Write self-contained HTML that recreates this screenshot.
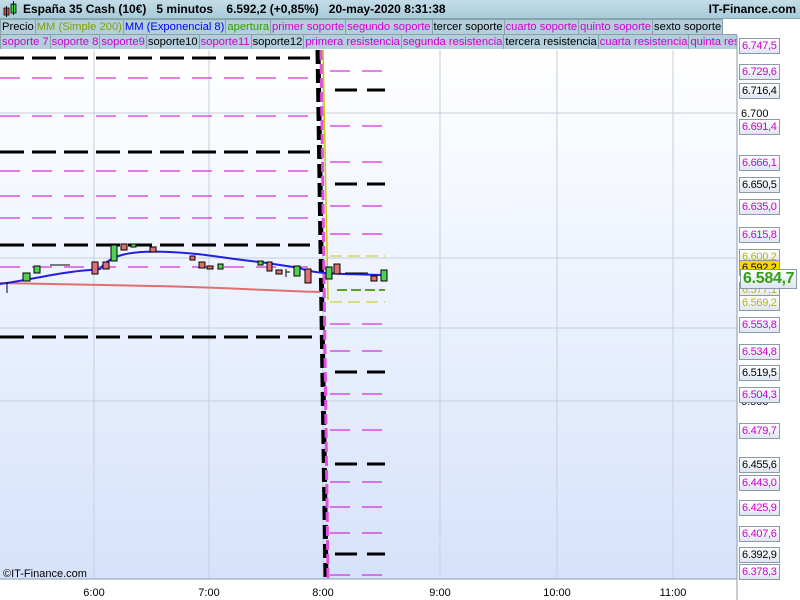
<!DOCTYPE html>
<html><head><meta charset="utf-8"><style>
body{margin:0;width:800px;height:600px;overflow:hidden;font-family:"Liberation Sans",sans-serif;background:#fff;position:relative}
.hdr{position:absolute;left:0;top:0;width:800px;height:18px;background:linear-gradient(#c4dde8,#a9cbda);border-bottom:1px solid #8aa;font-size:12px;font-weight:bold;line-height:18px}
.row{position:absolute;left:0;height:15px;font-size:11.2px;line-height:15px;white-space:nowrap;overflow:hidden;width:737px;background:#fff}
.row span{display:inline-block;background:#b3cfdc;border:1px solid #8aa1ab;padding:0 1px;margin-right:-1px;height:14px;line-height:14px}
.ax{position:absolute;left:739px;font-size:11px;height:14px;line-height:14px;border:1px solid #8a9aa8;background:linear-gradient(#fff,#dfe6f2);padding:0 2px;color:#d000d0;letter-spacing:-0.3px}
.k{color:#000}.y{color:#b8b800}
</style></head><body>
<div class="hdr"><svg width="18" height="18" style="position:absolute;left:2px;top:0"><rect x="2" y="8" width="5" height="7" fill="#e05050" stroke="#000" stroke-width=".8"/><line x1="4.5" y1="6" x2="4.5" y2="17" stroke="#000"/><rect x="9" y="4" width="5" height="9" fill="#40d040" stroke="#000" stroke-width=".8"/><line x1="11.5" y1="1" x2="11.5" y2="15" stroke="#000"/></svg><span style="position:absolute;left:23px">España 35 Cash (10€)&nbsp;&nbsp;&nbsp;5 minutos&nbsp;&nbsp;&nbsp;&nbsp;6.592,2 (+0,85%)&nbsp;&nbsp;&nbsp;20-may-2020 8:31:38</span><span style="position:absolute;right:4px">IT-Finance.com</span></div>
<div class="row" style="top:19px"><span>Precio</span><span style="color:#80a000">MM (Simple 200)</span><span style="color:#0000ff">MM (Exponencial 8)</span><span style="color:#30a000">apertura</span><span style="color:#d000d0">primer soporte</span><span style="color:#d000d0">segundo soporte</span><span>tercer soporte</span><span style="color:#d000d0">cuarto soporte</span><span style="color:#d000d0">quinto soporte</span><span>sexto soporte</span></div>
<div class="row" style="top:34px"><span style="color:#d000d0">soporte 7</span><span style="color:#d000d0">soporte 8</span><span style="color:#d000d0">soporte9</span><span>soporte10</span><span style="color:#d000d0">soporte11</span><span>soporte12</span><span style="color:#d000d0">primera resistencia</span><span style="color:#d000d0">segunda resistencia</span><span>tercera resistencia</span><span style="color:#d000d0">cuarta resistencia</span><span style="color:#d000d0">quinta resistencia</span></div>
<svg width="800" height="600" style="position:absolute;left:0;top:0;z-index:-0" viewBox="0 0 800 600">
<defs><linearGradient id="g" x1="0" y1="0" x2="0" y2="1"><stop offset="0" stop-color="#fff"/><stop offset="1" stop-color="#d6e2fb"/></linearGradient></defs>
<rect x="0" y="50" width="737" height="529" fill="url(#g)"/>
<g stroke="#c5cfdc" stroke-width="1">
<line x1="94" y1="50" x2="94" y2="578"/><line x1="209" y1="50" x2="209" y2="578"/><line x1="323" y1="50" x2="323" y2="578"/><line x1="440" y1="50" x2="440" y2="578"/><line x1="557" y1="50" x2="557" y2="578"/><line x1="673" y1="50" x2="673" y2="578"/>
<line x1="0" y1="113" x2="737" y2="113"/><line x1="0" y1="258" x2="737" y2="258"/><line x1="0" y1="328" x2="737" y2="328"/><line x1="0" y1="401" x2="737" y2="401"/>
</g>
<g stroke="#000" stroke-width="3" stroke-dasharray="24,8">
<line x1="0" y1="58" x2="310" y2="58"/><line x1="0" y1="152" x2="310" y2="152"/><line x1="0" y1="245" x2="310" y2="245"/><line x1="0" y1="337" x2="318" y2="337"/>
</g>
<g stroke="#000" stroke-width="3" stroke-dasharray="22,10">
<line x1="335" y1="90" x2="385" y2="90"/><line x1="335" y1="184" x2="385" y2="184"/><line x1="335" y1="372" x2="385" y2="372"/><line x1="335" y1="464" x2="385" y2="464"/><line x1="335" y1="554" x2="385" y2="554"/>
</g>
<g stroke="#d000d0" stroke-width="1" stroke-dasharray="20,12">
<line x1="0" y1="78" x2="310" y2="78"/><line x1="0" y1="116" x2="310" y2="116"/><line x1="0" y1="171" x2="310" y2="171"/><line x1="0" y1="196" x2="310" y2="196"/><line x1="0" y1="218" x2="310" y2="218"/><line x1="0" y1="267" x2="310" y2="267"/>
<line x1="330" y1="71" x2="385" y2="71"/><line x1="330" y1="126" x2="385" y2="126"/><line x1="330" y1="162" x2="385" y2="162"/><line x1="330" y1="206" x2="385" y2="206"/><line x1="330" y1="234" x2="385" y2="234"/><line x1="330" y1="324" x2="385" y2="324"/><line x1="330" y1="351" x2="385" y2="351"/><line x1="330" y1="394" x2="385" y2="394"/><line x1="330" y1="430" x2="385" y2="430"/><line x1="330" y1="482" x2="385" y2="482"/><line x1="330" y1="507" x2="385" y2="507"/><line x1="330" y1="533" x2="385" y2="533"/><line x1="330" y1="575" x2="385" y2="575"/>
</g>
<g stroke="#c8c800" stroke-width="1" stroke-dasharray="12,6"><line x1="330" y1="256" x2="385" y2="256"/><line x1="330" y1="302" x2="385" y2="302"/></g>
<line x1="337" y1="290" x2="385" y2="290" stroke="#60a020" stroke-width="2" stroke-dasharray="10,4"/>
<g stroke="#000" stroke-width="5" stroke-dasharray="14,5"><line x1="318" y1="50" x2="326" y2="578"/></g>
<line x1="321" y1="50" x2="328" y2="578" stroke="#e050e0" stroke-width="3" stroke-dasharray="10,4"/>
<line x1="323" y1="50" x2="328" y2="300" stroke="#c8c800" stroke-width="1.5"/>
<path d="M0 283 C40 284,80 285,150 286 S250 290,320 292" stroke="#e07070" stroke-width="2" fill="none"/>
<path d="M0 284 C30 280,60 272,90 270 L100 269 C110 255,130 250,170 252 S220 258,260 262 L300 268 C310 273,330 274,385 275" stroke="#2020e0" stroke-width="2" fill="none"/>
<g stroke="#000" stroke-width="1">
<g fill="#50d050"><rect x="23" y="273" width="7" height="8"/><rect x="34" y="266" width="6" height="7"/><rect x="111" y="245" width="6" height="16"/><rect x="131" y="244" width="5" height="3"/><rect x="218" y="264" width="5" height="5"/><rect x="258" y="261" width="5" height="4"/><rect x="294" y="266" width="6" height="10"/><rect x="326" y="267" width="6" height="12"/><rect x="381" y="270" width="6" height="11"/></g>
<g fill="#e07070"><rect x="92" y="262" width="6" height="12"/><rect x="103" y="262" width="6" height="7"/><rect x="121" y="244" width="6" height="6"/><rect x="150" y="247" width="6" height="5"/><rect x="190" y="256" width="5" height="4"/><rect x="199" y="262" width="6" height="6"/><rect x="207" y="266" width="6" height="3"/><rect x="267" y="262" width="5" height="9"/><rect x="276" y="270" width="6" height="4"/><rect x="305" y="269" width="6" height="14"/><rect x="334" y="264" width="6" height="10"/><rect x="371" y="276" width="6" height="5"/></g>
<line x1="7" y1="282" x2="7" y2="293"/><line x1="50" y1="265" x2="70" y2="265"/><line x1="286" y1="272" x2="290" y2="272"/><line x1="286" y1="269" x2="286" y2="277"/><line x1="160" y1="246" x2="178" y2="246"/><line x1="345" y1="273" x2="368" y2="273"/>
</g>
<rect x="0" y="579" width="737" height="21" fill="#fff"/><line x1="0" y1="579" x2="737" y2="579" stroke="#8a9aa8"/>
<line x1="737" y1="35" x2="737" y2="600" stroke="#8a9aa8"/>
<g font-size="11" text-anchor="middle" fill="#000" font-family="Liberation Sans"><text x="94" y="596">6:00</text><text x="209" y="596">7:00</text><text x="323" y="596">8:00</text><text x="440" y="596">9:00</text><text x="557" y="596">10:00</text><text x="673" y="596">11:00</text></g>
<text x="3" y="577" font-size="11" fill="#000" font-family="Liberation Sans">©IT-Finance.com</text>
<text x="741" y="117" font-size="11">6.700</text><text x="741" y="405" font-size="11">6.500</text>
</svg>
<div class="ax" style="top:38px">6.747,5</div><div class="ax" style="top:64px">6.729,6</div><div class="ax k" style="top:83px">6.716,4</div><div class="ax" style="top:119px">6.691,4</div><div class="ax" style="top:155px">6.666,1</div><div class="ax k" style="top:177px">6.650,5</div><div class="ax" style="top:199px">6.635,0</div><div class="ax" style="top:227px">6.615,8</div><div class="ax y" style="top:249px">6.600,2</div><div class="ax k" style="top:260px;background:#f8d800">6.592,2</div><div class="ax y" style="top:282px">6.577,1</div><div class="ax y" style="top:295px">6.569,2</div>
<div class="ax" style="top:269px;left:740px;height:18px;line-height:18px;font-size:16px;font-weight:bold;color:#30a010;z-index:2">6.584,7</div>
<div class="ax" style="top:317px">6.553,8</div><div class="ax" style="top:344px">6.534,8</div><div class="ax k" style="top:365px">6.519,5</div><div class="ax" style="top:387px">6.504,3</div><div class="ax" style="top:423px">6.479,7</div><div class="ax k" style="top:457px">6.455,6</div><div class="ax" style="top:475px">6.443,0</div><div class="ax" style="top:500px">6.425,9</div><div class="ax" style="top:526px">6.407,6</div><div class="ax k" style="top:547px">6.392,9</div><div class="ax" style="top:564px">6.378,3</div>
</body></html>
